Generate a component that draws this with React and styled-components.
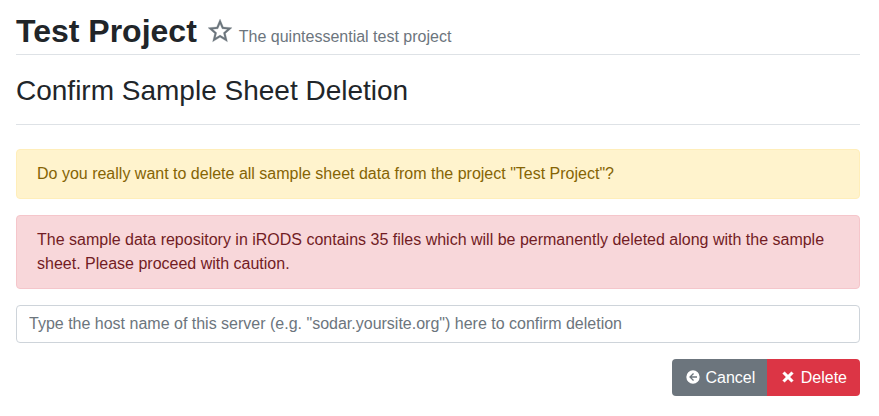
import React from "react";
import styled, { createGlobalStyle } from "styled-components";

const GlobalStyle = createGlobalStyle`
  *, *::before, *::after { box-sizing: border-box; }
  body {
    margin: 0;
    background: #fff;
    color: #212529;
    font: 400 16px/1.5 "Liberation Sans", Arial, sans-serif;
  }
`;

const Page = styled.main`
  display: flex;
  flex-direction: column;
  padding: 7px 19px 0 16px;
`;

const ProjectHeader = styled.header`
  display: flex;
  align-items: baseline;
  height: 48px;
  border-bottom: 1px solid #dee2e6;
`;

const ProjectTitle = styled.h1`
  margin: 0;
  font-size: 32px;
  font-weight: 700;
  line-height: 48px;
`;

const StarIcon = styled.svg`
  width: 28.8px;
  height: 28.8px;
  margin: 9.8px 4.4px 0 8.8px;
  align-self: flex-start;
  fill: #6c757d;
  stroke: #6c757d;
  stroke-width: 0.2;
`;

const ProjectDescription = styled.span`
  color: #6c757d;
`;

const PageHeader = styled.div`
  height: 70px;
  padding-top: 19px;
  border-bottom: 1px solid #dee2e6;
`;

const PageTitle = styled.h2`
  margin: 0;
  font-size: 28px;
  font-weight: 400;
  line-height: 34px;
`;

const alertColors = {
  warning: { text: "#856404", fill: "#fff3cd", border: "#ffeeba" },
  danger: { text: "#721c24", fill: "#f8d7da", border: "#f5c6cb" },
};

const Alert = styled.div`
  padding: 12px 20px;
  margin-bottom: 16px;
  border: 1px solid ${(p) => alertColors[p.$variant].border};
  border-radius: 4px;
  background: ${(p) => alertColors[p.$variant].fill};
  color: ${(p) => alertColors[p.$variant].text};
`;

const Form = styled.form`
  display: flex;
  flex-direction: column;
  gap: 16px;
`;

const Alerts = styled.section`
  margin-top: 24px;
`;

const HostInput = styled.input`
  width: 100%;
  height: 38px;
  padding: 6px 12px;
  border: 1px solid #ced4da;
  border-radius: 4px;
  background: #fff;
  color: #495057;
  font: inherit;
  &::placeholder { color: #6c757d; opacity: 1; }
`;

const ButtonGroup = styled.div`
  display: flex;
  align-self: flex-end;
`;

const Button = styled.button`
  display: flex;
  align-items: center;
  gap: 4.45px;
  height: 37px;
  padding: 0 13px;
  border: 0;
  background: ${(p) => (p.$danger ? "#dc3545" : "#6c757d")};
  color: #fff;
  font: inherit;
  &:first-child { border-radius: 4px 0 0 4px; }
  &:last-child { margin-left: -1px; border-radius: 0 4px 4px 0; }
`;

const ButtonIcon = styled.svg`
  width: 16px;
  height: 16px;
  margin-bottom: 1.4px;
`;

export default function App() {
  return (
    <>
      <GlobalStyle />
      <Page>
        <ProjectHeader>
          <ProjectTitle>Test Project</ProjectTitle>
          <StarIcon viewBox="0.3 0.3 24 24" aria-hidden="true">
            <path d="M12 15.39L8.24 17.66L9.23 13.38L5.91 10.5L10.29 10.13L12 6.09L13.71 10.13L18.09 10.5L14.77 13.38L15.76 17.66ZM22 9.24L14.81 8.63L12 2L9.19 8.63L2 9.24L7.45 13.97L5.82 21L12 17.27L18.18 21L16.54 13.97L22 9.24Z" />
          </StarIcon>
          <ProjectDescription>The quintessential test project</ProjectDescription>
        </ProjectHeader>
        <PageHeader>
          <PageTitle>Confirm Sample Sheet Deletion</PageTitle>
        </PageHeader>
        <Alerts>
          <Alert $variant="warning">
            Do you really want to delete all sample sheet data from the project "Test Project"?
          </Alert>
          <Alert $variant="danger">
            The sample data repository in iRODS contains 35 files which will be permanently
            deleted along with the sample sheet. Please proceed with caution.
          </Alert>
        </Alerts>
        <Form>
          <HostInput placeholder={'Type the host name of this server (e.g. "sodar.yoursite.org") here to confirm deletion'} />
          <ButtonGroup>
            <Button type="button">
              <ButtonIcon viewBox="0 0 24 24" aria-hidden="true">
                <path fill="currentColor" d="M2 12A10 10 0 0 1 12 2A10 10 0 0 1 22 12A10 10 0 0 1 12 22A10 10 0 0 1 2 12M18 11H10L13.5 7.5L12.08 6.08L6.16 12L12.08 17.92L13.5 16.5L10 13H18V11Z" />
              </ButtonIcon>
              Cancel
            </Button>
            <Button type="button" $danger>
              <ButtonIcon viewBox="0 0 24 24" aria-hidden="true">
                <path
                  fill="currentColor"
                  stroke="currentColor"
                  strokeWidth="0.6"
                  strokeLinejoin="round"
                  d="M20 6.91L17.09 4L12 9.09L6.91 4L4 6.91L9.09 12L4 17.09L6.91 20L12 14.91L17.09 20L20 17.09L14.91 12L20 6.91Z"
                />
              </ButtonIcon>
              Delete
            </Button>
          </ButtonGroup>
        </Form>
      </Page>
    </>
  );
}
